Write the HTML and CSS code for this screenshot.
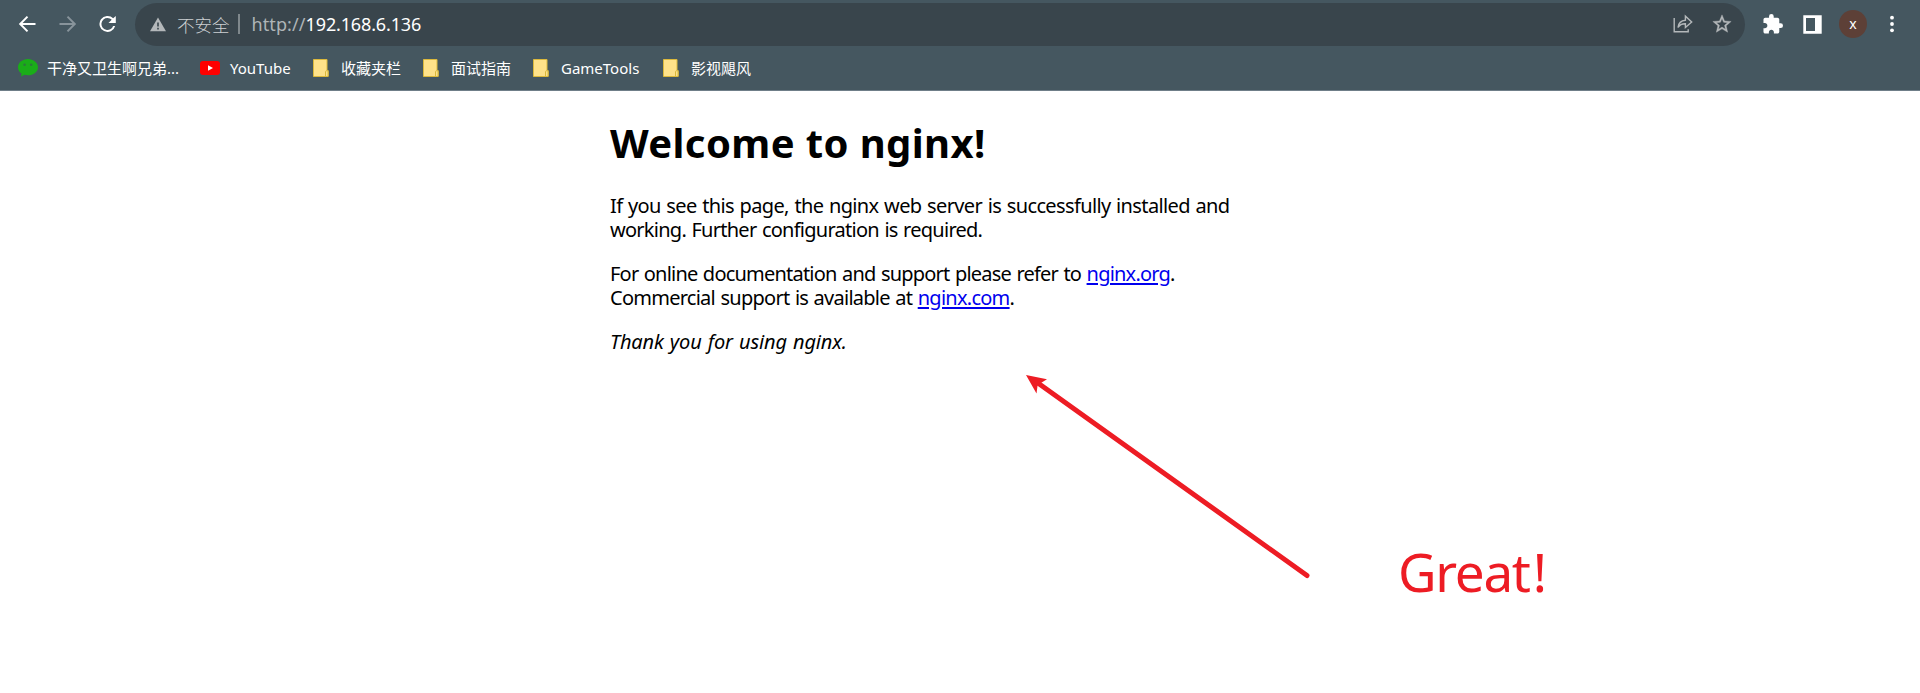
FILE: index.html
```html
<!DOCTYPE html>
<html lang="zh-CN">
<head>
<meta charset="utf-8">
<title>Welcome to nginx!</title>
<link rel="stylesheet" href="styles.css">
</head>
<body>
<header class="browser">
  <div class="toolbar">
    <nav class="nav">
      <svg class="icon" width="24" height="24" viewBox="0 0 24 24"><path d="M20.500 12H5.500M12.500 4.600 5.200 12l7.300 7.400" fill="none" stroke="#fff" stroke-width="2"/></svg>
      <svg class="icon" width="24" height="24" viewBox="0 0 24 24"><path d="M4.500 12h15M12.500 4.600l7.300 7.400-7.300 7.400" fill="none" stroke="#88949b" stroke-width="2"/></svg>
      <svg class="icon" width="24" height="24" viewBox="-.5 0 24 24"><path d="M17.700 6.300A8 8 0 1 0 19.700 14h-2.100A6 6 0 1 1 12 6c1.700 0 3.100.7 4.200 1.800L13 11h7.300V4z" fill="#fff"/></svg>
    </nav>
    <div class="omnibox">
      <svg class="warn" width="16" height="15" viewBox="0 0 16 15"><path d="M8 .5 16 14.300H0z" fill="#b4b8ba"/><path d="M7.200 5.500h1.600v4H7.200zM7.200 10.800h1.600v1.600H7.200z" fill="#39454c"/></svg>
      <span class="insecure">不安全</span>
      <span class="divider"></span>
      <span class="url"><span class="scheme">http://</span><span class="host">192.168.6.136</span></span>
      <svg class="share" width="20" height="20" viewBox="0 0 20 20"><path d="M1.200 4v13.700h14v-2.400M5 13.500c.5-4.700 3-7 7.400-7.300V2.200L18.700 8l-6.300 5.500v-3.700C9 9.700 6.700 10.800 5 13.500z" fill="none" stroke="#b4b8ba" stroke-width="1.400"/></svg>
      <svg class="star" width="22" height="22" viewBox="0 0 24 24"><path d="M22 9.240l-7.190-.62L12 2 9.190 8.630 2 9.240l5.460 4.730L5.820 21 12 17.270 18.180 21l-1.630-7.030L22 9.240zM12 15.400l-3.760 2.270 1-4.280-3.320-2.880 4.380-.38L12 6.100l1.710 4.040 4.380.38-3.320 2.880 1 4.280L12 15.400z" fill="#b4b8ba" stroke="#b4b8ba" stroke-width=".4"/></svg>
    </div>
    <div class="actions">
      <svg class="icon" width="20" height="20" viewBox="1.5 1 21.5 21.5"><path d="M20.500 11H19V7c0-1.100-.9-2-2-2h-4V3.500a2.500 2.500 0 0 0-5 0V5H4c-1.100 0-1.990.9-1.990 2v3.800H3.500c1.490 0 2.700 1.210 2.700 2.700s-1.210 2.700-2.700 2.700H2V20c0 1.100.9 2 2 2h3.800v-1.500c0-1.490 1.210-2.700 2.700-2.700s2.700 1.210 2.700 2.700V22H17c1.100 0 2-.9 2-2v-4h1.500a2.500 2.500 0 0 0 0-5z" fill="#fff"/></svg>
      <svg class="icon panel" width="19" height="19" viewBox="0 0 19 19"><path d="M.3.3h18.400v18.400H.3zM3 3v13h9V3z" fill="#fff" fill-rule="evenodd"/></svg>
      <span class="avatar">x</span>
      <svg class="icon" width="6" height="18" viewBox="0 0 6 18"><g fill="#fff"><circle cx="3" cy="2.700" r="1.900"/><circle cx="3" cy="9" r="1.900"/><circle cx="3" cy="15.300" r="1.900"/></g></svg>
    </div>
  </div>
  <div class="bookmarks">
    <span class="bookmark wechat"><svg width="20" height="18" viewBox="0 0 20 18"><path d="M10 0C4.500 0 0 3.600 0 8.200c0 2.700 1.500 5 3.600 6.500L3 17.600l3.500-1.800c1.100.3 2.300.5 3.500.5 5.500 0 10-3.600 10-8.100S15.500 0 10 0z" fill="#1aad19"/><circle cx="6.600" cy="5.700" r="1.300" fill="#2b7a3a"/><circle cx="13.200" cy="5.700" r="1.300" fill="#2b7a3a"/></svg><span class="label">干净又卫生啊兄弟...</span></span>
    <span class="bookmark youtube"><svg width="20" height="14" viewBox="0 0 20 14"><rect width="20" height="14" rx="3" fill="#f00"/><path d="M8 4.200v5.600L13 7z" fill="#fff"/></svg><span class="label">YouTube</span></span>
    <span class="bookmark fav"><svg width="16" height="18" viewBox="0 0 16 18"><path d="M.5.5h13.500v11h1.200v6H.5z" fill="#ffe28a" stroke="#dcb93c"/><path d="M12.500 17v-4.500c0-1 2.500-1 2.500 0V17" fill="#fbe38e" stroke="#dcb93c"/></svg><span class="label">收藏夹栏</span></span>
    <span class="bookmark interview"><svg width="16" height="18" viewBox="0 0 16 18"><path d="M.5.5h13.500v11h1.200v6H.5z" fill="#ffe28a" stroke="#dcb93c"/><path d="M12.500 17v-4.500c0-1 2.500-1 2.500 0V17" fill="#fbe38e" stroke="#dcb93c"/></svg><span class="label">面试指南</span></span>
    <span class="bookmark tools"><svg width="16" height="18" viewBox="0 0 16 18"><path d="M.5.5h13.500v11h1.200v6H.5z" fill="#ffe28a" stroke="#dcb93c"/><path d="M12.500 17v-4.500c0-1 2.500-1 2.500 0V17" fill="#fbe38e" stroke="#dcb93c"/></svg><span class="label">GameTools</span></span>
    <span class="bookmark film"><svg width="16" height="18" viewBox="0 0 16 18"><path d="M.5.5h13.500v11h1.200v6H.5z" fill="#ffe28a" stroke="#dcb93c"/><path d="M12.500 17v-4.500c0-1 2.500-1 2.500 0V17" fill="#fbe38e" stroke="#dcb93c"/></svg><span class="label">影视飓风</span></span>
  </div>
</header>
<main class="page">
  <h1 class="title">Welcome to nginx!</h1>
  <p class="text"><span class="lead">If you see this page, the nginx web server is successfully installed and</span><br>working. Further configuration is required.</p>
  <p class="text"><span class="docs">For online documentation and support please refer to <a class="link" href="#">nginx.org</a>.</span><br>Commercial support is available at <a class="link" href="#">nginx.com</a>.</p>
  <p class="text"><em class="thanks">Thank you for using nginx.</em></p>
</main>
<svg class="arrow" width="290" height="210" viewBox="1022 370 290 210"><path d="M1040 384.500 1307 575.500" stroke="#ed1c24" stroke-width="5" stroke-linecap="round"/><path d="M1026 375l21 4.300-6.500 4-3 2.700-1 7.500z" fill="#ed1c24"/></svg>
<span class="note">Great<span class="bang">!</span></span>
</body>
</html>
```
FILE: styles.css
```css
body { margin: 0; height: 693px; overflow: hidden; position: relative; background: #fff; }
.browser { box-sizing: border-box; height: 91px; background: #455760; border-bottom: 1px solid #6f7e88; color: #fff; font-family: "Noto Sans", "Noto Sans CJK SC", sans-serif; }
.toolbar { display: flex; align-items: center; height: 46px; padding-top: 2px; box-sizing: border-box; }
.toolbar svg { display: block; flex: none; }
.nav { display: flex; gap: 16px; padding-left: 15px; width: 120px; }
.omnibox { display: flex; align-items: center; box-sizing: border-box; width: 1610px; height: 43px; padding: 0 12px 0 15px; border-radius: 22px; background: #39454c; font-size: 18px; white-space: nowrap; }
.insecure { margin-left: 11px; font-family: "Noto Sans CJK SC", sans-serif; font-weight: 300; font-size: 17.5px; color: #ccd0d2; }
.divider { width: 2px; height: 20px; margin: 0 12px 0 8px; background: #7f888c; }
.url { flex: 1; }
.scheme { color: #aeb4b7; letter-spacing: .1px; }
.host { letter-spacing: -.15px; }
.star { margin-left: 18px; }
.actions { display: flex; align-items: center; padding-left: 18px; }
.panel { margin-left: 20px; }
.avatar { width: 28px; height: 28px; margin: 0 22px 0 17px; border-radius: 50%; background: #5d4037; font-size: 14px; line-height: 27px; text-align: center; }
.bookmarks { display: flex; align-items: center; height: 44px; padding-left: 18px; font-size: 15px; }
.bookmark { display: flex; align-items: center; flex: none; white-space: nowrap; }
.label { line-height: 22px; }
.wechat { width: 182px; gap: 9px; }
.youtube { width: 113px; gap: 10px; }
.fav, .interview, .tools, .film { gap: 12px; }
.fav, .interview { width: 110px; }
.tools { width: 130px; }
.page { width: 700px; margin: 0 auto; font-family: "Noto Sans", sans-serif; font-size: 20px; line-height: 24px; letter-spacing: -.74px; word-spacing: 1px; color: #000; white-space: nowrap; }
.title { margin: 28px 0 27px; font-size: 40px; line-height: 48px; font-weight: 700; letter-spacing: .39px; word-spacing: 0; }
.text { margin: 0 0 20px; }
.lead { letter-spacing: -.63px; }
.docs { letter-spacing: -.79px; }
.thanks { letter-spacing: -.13px; }
.link { color: #00e; text-decoration: underline; text-underline-offset: 2px; text-decoration-thickness: 2px; }
.arrow { position: absolute; left: 1022px; top: 370px; }
.note { position: absolute; left: 1398px; top: 536px; font: 53px/72px "Noto Sans", sans-serif; letter-spacing: -1.3px; color: #ed1c24; }
.bang { margin-left: 3px; }
```
